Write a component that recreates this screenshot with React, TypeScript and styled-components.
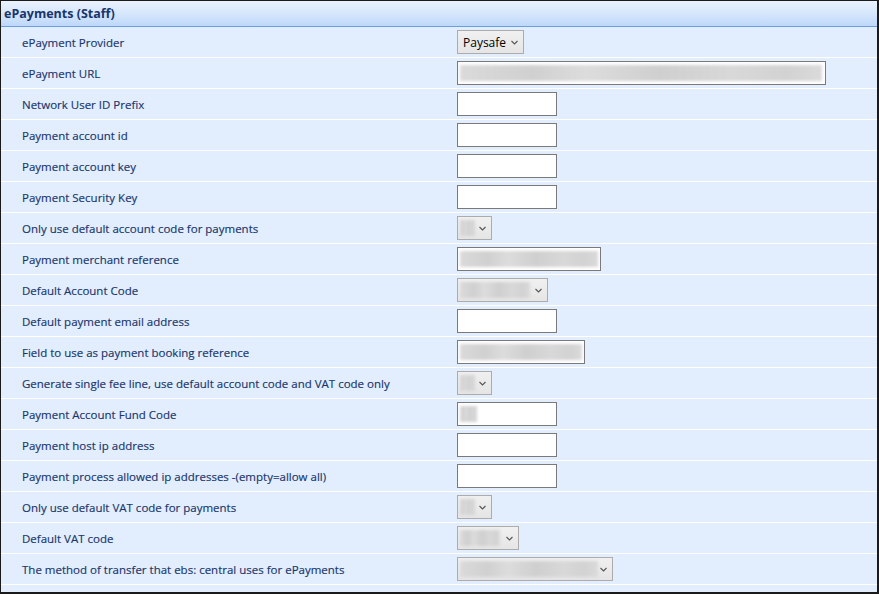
import React from 'react';
import styled, { createGlobalStyle } from 'styled-components';

const GlobalStyle = createGlobalStyle`
  html, body {
    margin: 0;
    padding: 0;
    background: #ffffff;
  }
  * { box-sizing: border-box; }
`;

const navy = '#19356c';
const rowBlue = '#e2eefd';

const Frame = styled.div`
  width: 879px;
  height: 594px;
  border-top: 1px solid #1a1a1a;
  border-left: 1px solid #1a1a1a;
  border-right: 2px solid #1a1a1a;
  border-bottom: 2px solid #1a1a1a;
  background: ${rowBlue};
  font-family: 'Open Sans', 'Noto Sans', sans-serif;
  overflow: hidden;
`;

const Header = styled.div`
  height: 26px;
  padding-left: 3px;
  line-height: 25px;
  font-size: 12.5px;
  font-weight: 700;
  color: ${navy};
  background: linear-gradient(to bottom, #eaf2fd 0%, #d6e7fc 50%, #bdd8fa 100%);
  border-bottom: 1px solid #6a9edd;
`;

const Row = styled.div`
  display: grid;
  grid-template-columns: 456px 1fr;
  align-items: center;
  height: 31px;
  border-bottom: 1px solid #ffffff;
`;

const Label = styled.div`
  padding-left: 21px;
  font-size: 11.5px;
  color: ${navy};
  white-space: nowrap;
  -webkit-text-stroke: 0.15px ${navy};
`;

const TextBox = styled.div<{ $w: number }>`
  width: ${(p) => p.$w}px;
  height: 24px;
  border: 1px solid #7a7a7a;
  background: #ffffff;
  padding: 2px;
  display: flex;
  align-items: center;
  overflow: hidden;
`;

const Select = styled.div<{ $w: number }>`
  width: ${(p) => p.$w}px;
  height: 24px;
  border: 1px solid #acacac;
  background: linear-gradient(to bottom, #f0f0f0, #e5e5e5);
  display: flex;
  align-items: center;
  justify-content: space-between;
  padding: 0 5px 0 2px;
  font-size: 12px;
  color: #000;
  overflow: hidden;
`;

const SelectText = styled.span`
  padding-left: 3px;
`;

const Blur = styled.div<{ $w: number; $h?: number }>`
  width: ${(p) => p.$w}px;
  height: ${(p) => p.$h ?? 16}px;
  flex-shrink: 0;
  background: linear-gradient(
    to right,
    #dadada 0%,
    #d0d0d0 20%,
    #dcdcdc 35%,
    #cfcfcf 55%,
    #d8d8d8 75%,
    #d2d2d2 90%,
    #dadada 100%
  );
  filter: blur(1.5px);
`;

const Chevron = () => (
  <svg width="7" height="5" viewBox="0 0 7 5">
    <polyline points="0.5,1 3.5,4 6.5,1" fill="none" stroke="#555" strokeWidth="1.1" />
  </svg>
);

type Ctrl =
  | { kind: 'text'; w: number; blur?: number }
  | { kind: 'select'; w: number; text?: string; blur?: number };

const rows: { label: string; ctrl: Ctrl }[] = [
  { label: 'ePayment Provider', ctrl: { kind: 'select', w: 67, text: 'Paysafe' } },
  { label: 'ePayment URL', ctrl: { kind: 'text', w: 369, blur: 362 } },
  { label: 'Network User ID Prefix', ctrl: { kind: 'text', w: 100 } },
  { label: 'Payment account id', ctrl: { kind: 'text', w: 100 } },
  { label: 'Payment account key', ctrl: { kind: 'text', w: 100 } },
  { label: 'Payment Security Key', ctrl: { kind: 'text', w: 100 } },
  { label: 'Only use default account code for payments', ctrl: { kind: 'select', w: 35, blur: 15 } },
  { label: 'Payment merchant reference', ctrl: { kind: 'text', w: 144, blur: 138 } },
  { label: 'Default Account Code', ctrl: { kind: 'select', w: 91, blur: 70 } },
  { label: 'Default payment email address', ctrl: { kind: 'text', w: 100 } },
  { label: 'Field to use as payment booking reference', ctrl: { kind: 'text', w: 128, blur: 122 } },
  { label: 'Generate single fee line, use default account code and VAT code only', ctrl: { kind: 'select', w: 35, blur: 15 } },
  { label: 'Payment Account Fund Code', ctrl: { kind: 'text', w: 100, blur: 17 } },
  { label: 'Payment host ip address', ctrl: { kind: 'text', w: 100 } },
  { label: 'Payment process allowed ip addresses -(empty=allow all)', ctrl: { kind: 'text', w: 100 } },
  { label: 'Only use default VAT code for payments', ctrl: { kind: 'select', w: 35, blur: 15 } },
  { label: 'Default VAT code', ctrl: { kind: 'select', w: 62, blur: 40 } },
  { label: 'The method of transfer that ebs: central uses for ePayments', ctrl: { kind: 'select', w: 156, blur: 138 } },
];

const Control = ({ ctrl }: { ctrl: Ctrl }) => {
  if (ctrl.kind === 'text') {
    return <TextBox $w={ctrl.w}>{ctrl.blur ? <Blur $w={ctrl.blur} /> : null}</TextBox>;
  }
  return (
    <Select $w={ctrl.w}>
      {ctrl.text ? <SelectText>{ctrl.text}</SelectText> : <Blur $w={ctrl.blur || 0} />}
      <Chevron />
    </Select>
  );
};

export default function App() {
  return (
    <>
      <GlobalStyle />
      <Frame>
        <Header>ePayments (Staff)</Header>
        {rows.map((r) => (
          <Row key={r.label}>
            <Label>{r.label}</Label>
            <div>
              <Control ctrl={r.ctrl} />
            </div>
          </Row>
        ))}
      </Frame>
    </>
  );
}
